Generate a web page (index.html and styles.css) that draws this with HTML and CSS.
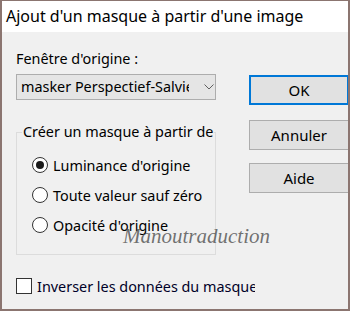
FILE: index.html
```html
<!DOCTYPE html>
<html lang="fr">
<head>
  <meta charset="UTF-8">
  <title>Ajout d'un masque à partir d'une image</title>
  <link rel="stylesheet" href="styles.css">
</head>
<body>
  <div class="window">
    <div class="titlebar">Ajout d'un masque à partir d'une image</div>

    <div class="content">
      <div class="left-col">
        <div class="field-label">Fenêtre d'origine :</div>
        <div class="combo">
          <span class="combo-text">masker Perspectief-Salvie</span>
          <svg class="chevron" width="10" height="6" viewBox="0 0 10 6">
            <polyline points="0.5,0.5 5,5 9.5,0.5" fill="none" stroke="#606060" stroke-width="1"/>
          </svg>
        </div>

        <!-- Source group -->
        <div class="group">
          <div class="group-title">Créer un masque à partir de</div>
          <div class="radio-row"><span class="radio checked"></span>Luminance d'origine</div>
          <div class="radio-row"><span class="radio"></span>Toute valeur sauf zéro</div>
          <div class="radio-row"><span class="radio"></span>Opacité d'origine</div>
        </div>

        <div class="check-row"><span class="checkbox"></span><span class="check-text">Inverser les données du masque</span></div>
      </div>

      <div class="right-col">
        <div class="btn btn-default">OK</div>
        <div class="btn btn-cancel">Annuler</div>
        <div class="btn btn-help">Aide</div>
      </div>
    </div>

    <div class="watermark">Manoutraduction</div>
  </div>
</body>
</html>
```

FILE: styles.css
```css
/* Global */
body {
  margin: 0;
  padding: 0;
  background: #f0f0f0;
  font-family: 'Noto Sans', 'Liberation Sans', sans-serif;
  color: #000;
}

.window {
  position: relative;
  width: 350px;
  height: 311px;
  box-sizing: border-box;
  border: 1px solid #8b7570;
  border-left-width: 2px;
  border-right-width: 2px;
  border-bottom-width: 2px;
  background: #f0f0f0;
  overflow: hidden;
}

/* Title bar */
.titlebar {
  height: 31px;
  background: #fff;
  font-size: 16px;
  line-height: 30px;
  padding-left: 4px;
  white-space: nowrap;
}

.content {
  display: flex;
  padding-top: 17px;
}

/* Left column */
.left-col {
  width: 200px;
  flex-shrink: 0;
  margin-left: 14px;
  font-size: 14.4px;
}

.field-label {
  line-height: 20px;
}

.combo {
  display: flex;
  align-items: center;
  height: 26px;
  margin-top: 5px;
  box-sizing: border-box;
  border: 1px solid #adadad;
  background: #e5e5e5;
  padding-left: 4px;
}

.combo-text {
  width: 168px;
  flex-shrink: 0;
  overflow: hidden;
  white-space: nowrap;
  line-height: 20px;
}

.chevron {
  margin-left: 15px;
}

/* Group box */
.group {
  position: relative;
  margin-top: 32px;
  height: 123px;
  box-sizing: border-box;
  border: 1px solid #dcdcdc;
  padding-top: 17px;
}

.group-title {
  position: absolute;
  left: 5px;
  top: -11px;
  padding: 0 1px;
  background: #f0f0f0;
  line-height: 20px;
  white-space: nowrap;
}

.radio-row {
  display: flex;
  align-items: center;
  height: 30px;
  padding-left: 15px;
  white-space: nowrap;
}

.radio {
  position: relative;
  width: 16px;
  height: 16px;
  box-sizing: border-box;
  border: 1px solid #333;
  border-radius: 50%;
  background: #fff;
  margin-right: 5px;
}

.radio.checked::after {
  content: '';
  position: absolute;
  left: 3px;
  top: 3px;
  width: 8px;
  height: 8px;
  border-radius: 50%;
  background: #1a1a1a;
}

/* Checkbox */
.check-row {
  display: flex;
  align-items: center;
  margin-top: 23px;
  height: 16px;
}

.checkbox {
  width: 16px;
  height: 16px;
  box-sizing: border-box;
  border: 1px solid #333;
  background: #fff;
  margin-right: 5px;
  flex-shrink: 0;
}

.check-text {
  width: 218px;
  flex-shrink: 0;
  overflow: hidden;
  white-space: nowrap;
  color: #000028;
}

/* Buttons */
.right-col {
  margin-left: 33px;
}

.btn {
  width: 100px;
  height: 30px;
  box-sizing: border-box;
  border: 1px solid #adadad;
  background: #e1e1e1;
  font-size: 15px;
  line-height: 28px;
  text-align: center;
}

.btn-default {
  margin-top: 26px;
  border: 2px solid #0078d7;
  line-height: 26px;
}

.btn-cancel {
  margin-top: 15px;
}

.btn-help {
  margin-top: 13px;
}

/* Watermark */
.watermark {
  position: absolute;
  left: 121px;
  top: 223px;
  font-family: 'Liberation Serif', serif;
  font-style: italic;
  font-size: 21px;
  color: rgba(70, 70, 70, 0.75);
  pointer-events: none;
}
```
